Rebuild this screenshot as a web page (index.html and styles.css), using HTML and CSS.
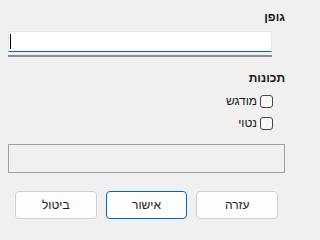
FILE: index.html
```html
<!DOCTYPE html>
<html lang="he">
<head>
<meta charset="utf-8">
<link rel="stylesheet" href="styles.css">
</head>
<body>
<div class="dialog" dir="rtl">
  <div class="label label-font">גופן</div>
  <div class="input"><span class="caret"></span></div>
  <div class="rule"></div>
  <div class="label label-props">תכונות</div>
  <div class="checks">
    <label class="check"><span class="box"></span><span>מודגש</span></label>
    <label class="check"><span class="box"></span><span>נטוי</span></label>
  </div>
  <div class="groupbox"></div>
  <div class="buttons">
    <button class="btn">עזרה</button>
    <button class="btn btn-default">אישור</button>
    <button class="btn">ביטול</button>
  </div>
</div>
</body>
</html>
```
FILE: styles.css
```css
html, body {
  margin: 0;
  padding: 0;
  background: #f0f0f0;
}
body {
  font-family: "Liberation Sans", "DejaVu Sans", sans-serif;
  font-size: 12px;
  color: #1b1b1b;
}
.dialog {
  width: 293px;
  height: 231px;
  box-sizing: border-box;
  overflow: hidden;
  padding: 0 8px;
  display: flex;
  flex-direction: column;
}
.label {
  font-weight: bold;
  line-height: 15px;
  height: 15px;
}
.label-font {
  margin-top: 10px;
}
.input {
  margin-top: 6px;
  margin-right: 13px;
  height: 19px;
  background: #ffffff;
  border: 1px solid #e6e6e6;
  border-bottom: 1px solid #0067c0;
  direction: ltr;
  display: flex;
  align-items: center;
  padding-left: 1px;
}
.caret {
  width: 1px;
  height: 15px;
  background: #000;
}
.rule {
  margin-top: 3px;
  margin-right: 13px;
  height: 2px;
  background: #8c8c8c;
}
.label-props {
  margin-top: 14px;
}
.checks {
  display: flex;
  flex-direction: column;
  gap: 9px;
  margin-top: 9px;
  margin-right: 12px;
}
.check {
  display: flex;
  align-items: center;
  gap: 3px;
  height: 13px;
  line-height: 13px;
}
.box {
  width: 11px;
  height: 11px;
  border: 1px solid #4a4a4a;
  border-radius: 3px;
  background: #f7f7f7;
}
.groupbox {
  margin-top: 14px;
  height: 27px;
  border: 1px solid #a0a0a0;
}
.buttons {
  display: flex;
  gap: 9px;
  margin-top: 18px;
  padding: 0 7px;
}
.btn {
  width: 82px;
  height: 28px;
  background: #fdfdfd;
  border: 1px solid #d0d0d0;
  border-radius: 4px;
  font-family: "Liberation Sans", "DejaVu Sans", sans-serif;
  font-size: 12px;
  color: #1b1b1b;
  padding: 0;
}
.btn-default {
  border-color: #0067c0;
}
```
